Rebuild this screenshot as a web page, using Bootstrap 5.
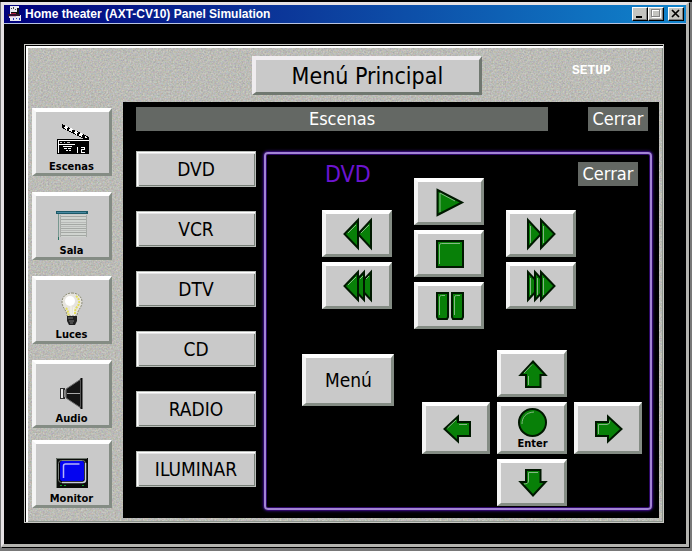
<!DOCTYPE html>
<html lang="es">
<head>
<meta charset="utf-8">
<meta name="viewport" content="width=device-width, initial-scale=1">
<title>Home theater (AXT-CV10) Panel Simulation</title>
<link href="https://cdn.jsdelivr.net/npm/bootstrap@5.3.0/dist/css/bootstrap.min.css" rel="stylesheet">
<style>
  body {
    background: #787878;
    border-top: 2px solid #000;
    padding: 0 3px 4px 1px;
    font-family: "DejaVu Sans Condensed", "DejaVu Sans", sans-serif;
    color: #000;
  }
  button { color: #000; padding: 0; border-radius: 0; }
  .sim-window {
    border: 3px solid;
    border-color: #e6e2e4 #b4b4b0 #b4b4b0 #e6e2e4;
    box-shadow: 1px 1px 0 #000;
    background: #000;
  }
  .title-strip {
    height: 19px;
    padding: 0 2px 0 4px;
    background: linear-gradient(90deg, #00007c, #0c3c9c 45%, #1084cc);
    border-bottom: 1px solid #b8c4e0;
  }
  .title-text {
    font: bold 12px/18px "Liberation Sans", Arial, sans-serif;
    color: #fff;
    margin-left: 3px;
  }
  .win-btn {
    width: 16px; height: 14px;
    background: #c4c4c0;
    border: 1px solid;
    border-color: #fff #000 #000 #fff;
    box-shadow: inset -1px -1px 0 #808080;
  }
  .stage { padding: 20px 22px 21px 20px; }
  .panel {
    --grain: url("data:image/svg+xml,%3Csvg xmlns='http://www.w3.org/2000/svg' width='160' height='160'%3E%3Cfilter id='n' color-interpolation-filters='sRGB'%3E%3CfeTurbulence type='fractalNoise' baseFrequency='0.6' numOctaves='2' stitchTiles='stitch'/%3E%3CfeColorMatrix values='.22 .08 .05 0 .56 .08 .22 .05 0 .56 .05 .08 .22 0 .54 0 0 0 0 1'/%3E%3C/filter%3E%3Crect width='160' height='160' filter='url(%23n)'/%3E%3C/svg%3E");
    background: #babab6 var(--grain);
    border: 1px solid #c8c8c4;
    box-shadow: inset 1px 1px 0 #000, inset 3px 3px 0 #fff, inset -1px -1px 0 #8c948c;
    padding: 3px 4px 4px 3px;
  }
  .panel-head {
    height: 54px;
    display: grid;
    grid-template-columns: 225fr 231fr 178fr;
    align-items: start;
  }
  .bevel {
    background: #c9c9c9;
    border: solid;
    border-width: 4px 3px 3px 4px;
    border-color: #fff #848c84 #848c84 #f4f4f4;
  }
  .main-title {
    height: 39px;
    margin-top: 8px;
    font-size: 23px;
    line-height: 30px;
    background: #c9c9c9;
    border: solid;
    border-width: 4px 3px 3px 4px;
    border-color: #efecef #707870 #707870 #efecef;
  }
  .setup-btn {
    font: bold 13px/14px "Liberation Mono", monospace;
    color: #fff;
    background: none;
    border: 0;
    margin: 16px 0 0 42px;
  }
  .side-nav { width: 95px; padding: 6px 11px 0 4px; gap: 16px; }
  .side-btn { height: 68px; padding: 14px 2px 0 0; }
  .side-btn:last-child { margin-top: -4px; }
  .side-btn .tiny-label { margin-top: 2px; }
  .tiny-label { font-size: 11px; line-height: 14px; font-weight: bold; }
  .screen { background: #000; padding: 5px 7px 7px 13px; }
  .screen-head { gap: 40px; padding-right: 4px; margin-bottom: 20px; }
  .gray-bar { background: #646864; color: #fff; font-size: 18px; line-height: 24px; height: 24px; border: 0; }
  .close-btn { width: 60px; color: #fff; }
  .source-list { width: 120px; gap: 24px; }
  .source-btn {
    height: 36px;
    font-size: 19px;
    line-height: 32px;
    background: #c9c9c9;
    border: 1px solid #b8bcb8;
    box-shadow: inset 1px 1px 0 #fff, inset 2px 2px 0 #e4e4e4, inset -1px -1px 0 #788078;
  }
  .device {
    border: 2px solid #a284d4;
    border-radius: 4px;
    box-shadow: 0 0 0 1px #2e0868, 0 0 3px 1px #34107c, inset 0 0 0 1px #2e0868;
    margin: 1px 0;
  }
  .transport { display: grid; grid-template-columns: 126fr 70px 144fr; column-gap: 22px; }
  .key-stack { width: 70px; gap: 5px; }
  .key { height: 47px; }
  .device-head { height: 56px; padding-top: 8px; }
  .device-name { font-size: 23px; line-height: 24px; color: #6c14d0; padding-left: 3px; }
  .lower { padding: 21px 8px 0 36px; }
  .menu-btn { width: 92px; height: 52px; font-size: 19px; margin-top: 4px; }
  .dpad {
    display: grid;
    grid-template: ". up ." 47px "left enter right" 52px ". down ." 47px / 68px 70px 68px;
    gap: 5px 7px;
  }
  .pad-up { grid-area: up; }
  .pad-left { grid-area: left; }
  .pad-enter { grid-area: enter; padding-top: 1px; }
  .pad-right { grid-area: right; }
  .pad-down { grid-area: down; }
  svg { display: block; overflow: visible; }
  .glyph { fill: #088008; stroke: #001800; stroke-width: 2; }
  .shine { fill: none; stroke: #84b884; stroke-width: 1; }
</style>
<script src="https://cdn.jsdelivr.net/npm/bootstrap@5.3.0/dist/js/bootstrap.bundle.min.js"></script>
</head>
<body class="min-vh-100 d-flex flex-column">
<div class="sim-window flex-grow-1 d-flex flex-column">
  <header class="title-strip d-flex align-items-center">
    <svg width="14" height="16" viewBox="0 0 14 16" shape-rendering="crispEdges" aria-hidden="true">
      <path d="M2 0h9v8H2zM1 9h12v6H2z" fill="#e8e8f0"/>
      <path d="M3 2h1v1H3zM5 1h1v2H5zM7 3h1v1H7z" fill="#444"/>
      <path d="M9 2h2v6H9zM3 6h7v2H3z" fill="#101010"/>
      <path d="M0 8h12v2H0z" fill="#30102c"/>
      <path d="M3 7h5v1H3z" fill="#b02040"/><path d="M1 10h7v1H1z" fill="#d8a8c8"/>
      <path d="M5 12h1v2H5zM8 12h1v1H8zM11 12h1v2h-1z" fill="#2838c0"/>
    </svg>
    <span class="title-text flex-grow-1 text-nowrap">Home theater (AXT-CV10) Panel Simulation</span>
    <button class="win-btn" type="button" aria-label="Minimizar"><svg width="14" height="12" shape-rendering="crispEdges"><path d="M3 8h6v2H3z"/></svg></button>
    <button class="win-btn" type="button" aria-label="Maximizar"><svg width="14" height="12" shape-rendering="crispEdges"><path d="M3.500 2.500h8v7h-8z" fill="none" stroke="#fff"/><path d="M2.500 1.500h8v7h-8z" fill="none" stroke="#848484"/></svg></button>
    <button class="win-btn ms-1" type="button" aria-label="Cerrar ventana"><svg width="14" height="12"><path d="M3 2l7 7M10 2l-7 7" stroke="#000" stroke-width="1.700"/></svg></button>
  </header>

  <div class="stage flex-grow-1 d-flex">
    <div class="panel flex-grow-1 d-flex flex-column">
      <div class="panel-head">
        <span></span>
        <button class="main-title text-nowrap" type="button">Menú Principal</button>
        <div class="d-flex justify-content-center"><button class="setup-btn" type="button">SETUP</button></div>
      </div>
      <div class="d-flex flex-grow-1">
        <nav class="side-nav d-flex flex-column flex-shrink-0" aria-label="Secciones">
          <button class="side-btn bevel d-flex flex-column align-items-center" type="button">
            <svg width="32" height="32" shape-rendering="crispEdges" aria-hidden="true">
              <path d="M6-2L33 11v2h-5L6 2z" fill="#000"/>
              <path d="M9 0l3 1-1 3-3-2zM14 2l3 1-1 3-3-1zM19 5l3 1-1 3-3-2zM24 7l3 1-1 3-3-1zM29 10l2 1-1 1-2-1z" fill="#fff"/>
              <path d="M1 13h32v15H1z" fill="#000"/>
              <path d="M2 14.500h31M2 18.500h17M2.500 14v13M7 20.500h9M8 22.500h3M12 22.500h3M10 24.500h2M13 24.500h2M21.500 21v6M25 21.500h3M28.500 21v3M25 23.500h4M25.500 24v3M25 26.500h4" stroke="#fff" fill="none"/>
              <path d="M4 16h2v1H4zM8 16h1v1H8zM11 16h3v1h-3z" fill="#bbb"/>
            </svg>
            <span class="tiny-label">Escenas</span>
          </button>
          <button class="side-btn bevel d-flex flex-column align-items-center" type="button">
            <svg width="32" height="32" shape-rendering="crispEdges" aria-hidden="true">
              <path d="M4 5h27v22H4z" fill="#d0d4d0"/>
              <path d="M4 6.500h27M4 9.500h27M4 14.500h27M4 18.500h27M4 22.500h27M4 25.500h27" stroke="#a4a8a4"/>
              <path d="M4 12h27M4 16.500h27M4 20.500h27" stroke="#b8bab8"/>
              <path d="M30.500 5v22M4.500 5v22" stroke="#a8aca8"/>
              <path d="M0 1h32v3H0z" fill="#1c5a68"/><path d="M1 2h29v1H1z" fill="#4888a0"/>
              <path d="M2 4h1v25H2z" fill="#789890"/><path d="M2 27h1v3H2z" fill="#287060"/>
            </svg>
            <span class="tiny-label">Sala</span>
          </button>
          <button class="side-btn bevel d-flex flex-column align-items-center" type="button">
            <svg width="32" height="32" aria-hidden="true">
              <path d="M16-1c6 0 10 4 10 9 0 6-5 8-5 14H11C11 16 6 14 6 8c0-5 4-9 10-9z" fill="#e6e4de" stroke="#8c8c74" stroke-dasharray="2 1"/>
              <path d="M20 2c4 3 4 8 1 11-2 2-2 5-2 8M10 14c2 2 2 5 3 8" fill="none" stroke="#e4dc58" stroke-width="2" stroke-dasharray="2 1"/>
              <ellipse cx="14" cy="7" rx="5" ry="5" fill="#fff"/>
              <path d="M15 12v9M18 13l-1 8" stroke="#f8f8e8"/>
              <path d="M11 22h10v5l-2 4h-6l-2-4z" fill="#202020"/>
              <path d="M12 24h5M13 27h5M14 29h3" stroke="#777"/>
            </svg>
            <span class="tiny-label">Luces</span>
          </button>
          <button class="side-btn bevel d-flex flex-column align-items-center" type="button">
            <svg width="32" height="32" aria-hidden="true">
              <path d="M4 10h5v11H4z" fill="#303030"/><path d="M5 11h2v9H5z" fill="#e4e4e4"/>
              <path d="M8 12h3v7H8z" fill="#888"/>
              <path d="M10 11L25 1v29L10 20z" fill="#141414" stroke="#707070"/>
              <path d="M11 15.500h14" stroke="#a8a8a8"/>
              <path d="M24.500 0h2v31h-2z" fill="#080808"/><path d="M24.500 2v27" stroke="#555"/>
            </svg>
            <span class="tiny-label">Audio</span>
          </button>
          <button class="side-btn bevel d-flex flex-column align-items-center" type="button">
            <svg width="32" height="32" aria-hidden="true">
              <path d="M0 0h32v30H0z" fill="#0a0c0a"/>
              <path d="M.5 30V.500H31" fill="none" stroke="#707870"/>
              <rect x="2.500" y="2.500" width="27" height="22" rx="3" fill="#000" stroke="#788078"/>
              <path d="M29.500 5v17q0 2.500-3 2.500H6" fill="none" stroke="#c8ccd8" stroke-width="1.500"/>
              <rect x="4" y="3" width="24" height="20" rx="2" fill="#0404f0"/>
              <path d="M7.500 20V8q0-2 2-2h14" fill="none" stroke="#b4b4f8" stroke-width="1.500"/>
              <path d="M4 27h2v1H4zM8 27h2v1H8zM26 27h2v1h-2z" fill="#10a028"/>
            </svg>
            <span class="tiny-label">Monitor</span>
          </button>
        </nav>

        <main class="screen flex-grow-1 d-flex flex-column">
          <div class="screen-head d-flex">
            <div class="gray-bar flex-grow-1 text-center">Escenas</div>
            <button class="gray-bar close-btn" type="button">Cerrar</button>
          </div>
          <div class="d-flex flex-grow-1 gap-2">
            <div class="source-list d-flex flex-column flex-shrink-0">
              <button class="source-btn" type="button">DVD</button>
              <button class="source-btn" type="button">VCR</button>
              <button class="source-btn" type="button">DTV</button>
              <button class="source-btn" type="button">CD</button>
              <button class="source-btn" type="button">RADIO</button>
              <button class="source-btn" type="button">ILUMINAR</button>
            </div>
            <section class="device flex-grow-1" aria-labelledby="device-name">
              <div class="transport">
                <div class="d-flex flex-column align-items-end">
                  <div class="key-stack device-head"><h1 class="device-name m-0 fw-normal" id="device-name">DVD</h1></div>
                  <div class="key-stack d-flex flex-column">
                    <button class="key bevel d-flex align-items-center justify-content-center" type="button" aria-label="Rebobinar">
                      <svg width="29" height="32"><path class="glyph" d="M28 2v28L15 16z"/><path class="glyph" d="M15 2v28L1.500 16z"/><path class="shine" d="M5 15l8-8M18 15l8-8"/></svg>
                    </button>
                    <button class="key bevel d-flex align-items-center justify-content-center" type="button" aria-label="Anterior">
                      <svg width="29" height="32"><path class="glyph" d="M28 2v28L15 16z"/><path class="glyph" d="M21 2v28L8 16z"/><path class="glyph" d="M15 2v28L1.500 16z"/><path class="shine" d="M5 15l8-8M17 9l3-3M23 9l3-3"/></svg>
                    </button>
                  </div>
                </div>
                <div class="key-stack d-flex flex-column pt-4">
                  <button class="key bevel d-flex align-items-center justify-content-center" type="button" aria-label="Reproducir">
                    <svg width="28" height="29"><path class="glyph" d="M1.500 2v25L26 14.500z"/><path class="shine" d="M4 24V5l15 8"/></svg>
                  </button>
                  <button class="key bevel d-flex align-items-center justify-content-center" type="button" aria-label="Detener">
                    <svg width="28" height="28"><path class="glyph" d="M1 1h26v26H1z"/><path class="shine" d="M3.500 24V5q0-1.500 2-1.500H24"/></svg>
                  </button>
                  <button class="key bevel d-flex align-items-center justify-content-center" type="button" aria-label="Pausa">
                    <svg width="28" height="28"><path class="glyph" d="M1 1h11v24l-1 2H2l-1-2zM16 1h11v24l-1 2h-9l-1-2z"/><path class="shine" d="M3.500 23V5q0-1.500 2-1.500H9M18.500 23V5q0-1.500 2-1.500H24"/></svg>
                  </button>
                </div>
                <div>
                  <div class="device-head d-flex justify-content-end pe-1"><button class="gray-bar close-btn me-2" type="button">Cerrar</button></div>
                  <div class="key-stack d-flex flex-column">
                    <button class="key bevel d-flex align-items-center justify-content-center" type="button" aria-label="Avanzar">
                      <svg width="29" height="32"><path class="glyph" d="M14 2v28l13.500-14z"/><path class="glyph" d="M1 2v28l13-14z"/><path class="shine" d="M3.500 25V8M16.500 25V8"/></svg>
                    </button>
                    <button class="key bevel d-flex align-items-center justify-content-center" type="button" aria-label="Siguiente">
                      <svg width="29" height="32"><path class="glyph" d="M1 2v28l13-14z"/><path class="glyph" d="M8 2v28l13-14z"/><path class="glyph" d="M14 2v28l13.500-14z"/><path class="shine" d="M3.500 25V8M10.500 25V8M16.500 25V8"/></svg>
                    </button>
                  </div>
                </div>
              </div>
              <div class="lower d-flex justify-content-between align-items-start">
                <button class="menu-btn bevel" type="button">Menú</button>
                <div class="dpad">
                  <button class="pad-up bevel d-flex align-items-center justify-content-center" type="button" aria-label="Arriba">
                    <svg width="28" height="28"><path class="glyph" d="M14 1.500L26.500 15H21.500V27H7V15H1.500z"/><path class="shine" d="M5 13l8-8.500M9.500 25v-9"/></svg>
                  </button>
                  <button class="pad-left bevel d-flex align-items-center justify-content-center" type="button" aria-label="Izquierda">
                    <svg width="28" height="28"><path class="glyph" d="M1.500 14L15 1.500V7H27V21H15V26.500z"/><path class="shine" d="M4.500 13L13 5M16 9.500h8"/></svg>
                  </button>
                  <button class="pad-enter bevel d-flex flex-column align-items-center" type="button">
                    <svg width="29" height="30"><circle class="glyph" cx="14.500" cy="15.500" r="13.500"/><path class="shine" d="M4 17C4 10 8 5.500 16 5"/></svg>
                    <span class="tiny-label">Enter</span>
                  </button>
                  <button class="pad-right bevel d-flex align-items-center justify-content-center" type="button" aria-label="Derecha">
                    <svg width="28" height="28"><path class="glyph" d="M26.500 14L13 1.500V7H1V21H13V26.500z"/><path class="shine" d="M3.500 19V9.500H12q3 0 3-4"/></svg>
                  </button>
                  <button class="pad-down bevel d-flex align-items-center justify-content-center" type="button" aria-label="Abajo">
                    <svg width="28" height="28"><path class="glyph" d="M14 26.500L26.500 13H21.500V1H7V13H1.500z"/><path class="shine" d="M5 15q4.500 0 4.500-3V3.500H19"/></svg>
                  </button>
                </div>
              </div>
            </section>
          </div>
        </main>
      </div>
    </div>
  </div>
</div>
</body>
</html>
